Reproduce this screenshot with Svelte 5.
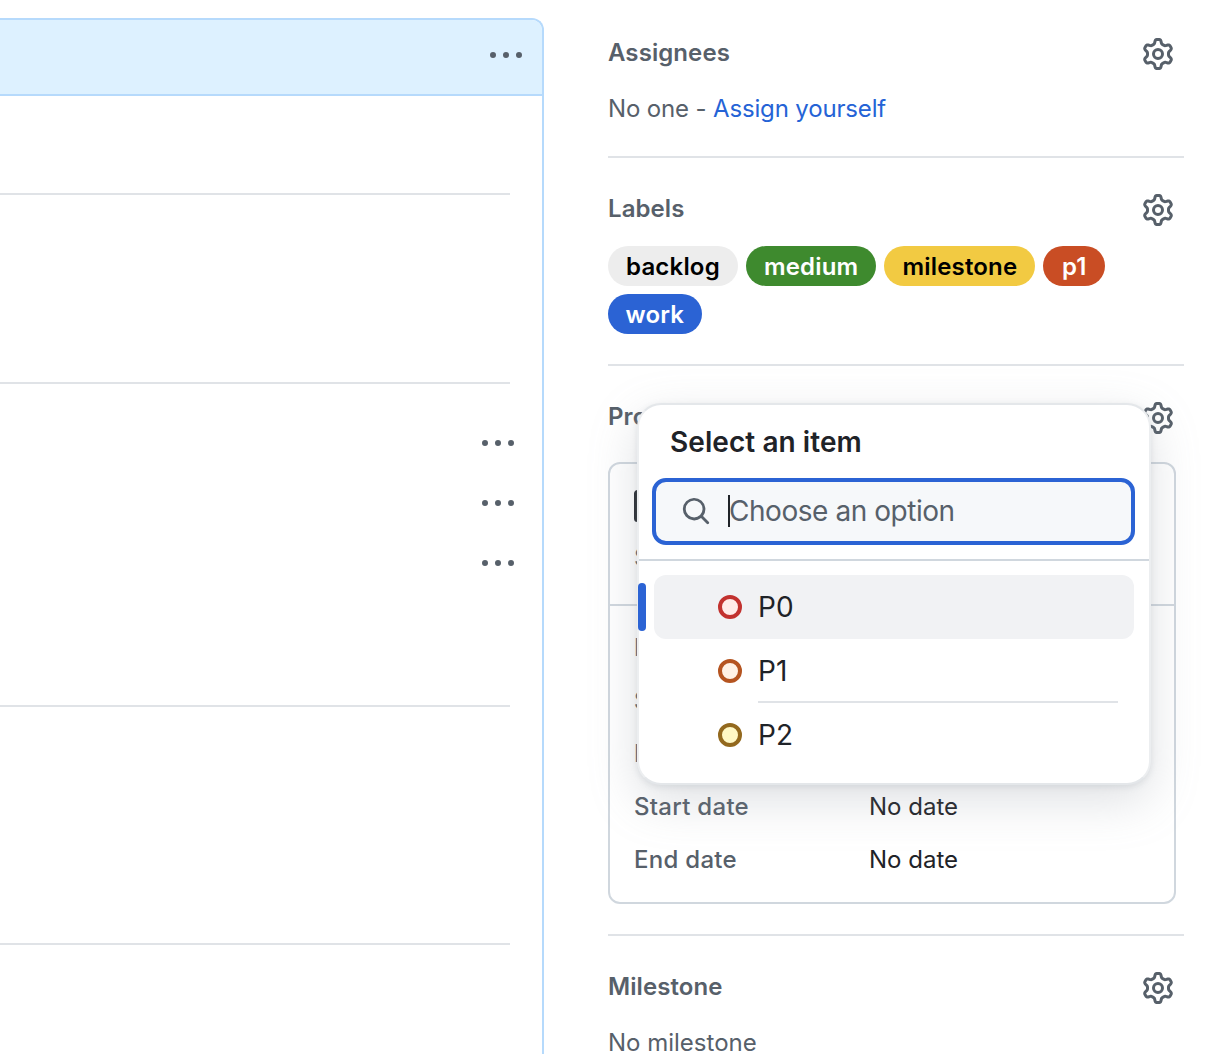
<script>
  const gear = "M8 0a8.2 8.2 0 0 1 .701.031C9.444.095 9.99.645 10.16 1.29l.288 1.107c.018.066.079.158.212.224.231.114.454.243.668.386.123.082.233.09.299.071l1.103-.303c.644-.176 1.392.021 1.82.63.27.385.506.792.704 1.218.315.675.111 1.422-.364 1.891l-.814.806c-.049.048-.098.147-.088.294.016.257.016.515 0 .772-.01.147.038.246.088.294l.814.806c.475.469.679 1.216.364 1.891a7.977 7.977 0 0 1-.704 1.217c-.428.61-1.176.807-1.82.63l-1.102-.302c-.067-.019-.177-.011-.3.071a5.909 5.909 0 0 1-.668.386c-.133.066-.194.158-.211.224l-.29 1.106c-.168.646-.715 1.196-1.458 1.26a8.006 8.006 0 0 1-1.402 0c-.743-.064-1.289-.614-1.458-1.26l-.289-1.106c-.018-.066-.079-.158-.212-.224a5.738 5.738 0 0 1-.668-.386c-.123-.082-.233-.09-.299-.071l-1.103.303c-.644.176-1.392-.021-1.82-.63a8.12 8.12 0 0 1-.704-1.218c-.315-.675-.111-1.422.363-1.891l.815-.806c.05-.048.098-.147.088-.294a6.214 6.214 0 0 1 0-.772c.01-.147-.038-.246-.088-.294l-.815-.806C.635 6.045.431 5.298.746 4.623a7.92 7.92 0 0 1 .704-1.217c.428-.61 1.176-.807 1.82-.63l1.102.302c.067.019.177.011.3-.071.214-.143.437-.272.668-.386.133-.066.194-.158.211-.224l.29-1.106C6.009.645 6.556.095 7.299.03 7.53.01 7.764 0 8 0Zm-.571 1.525c-.036.003-.108.036-.137.146l-.289 1.105c-.147.561-.549.967-.998 1.189-.173.086-.34.183-.5.29-.417.278-.97.423-1.529.27l-1.103-.303c-.109-.03-.175.016-.195.045-.22.312-.412.644-.573.99-.014.031-.021.11.059.19l.815.806c.411.406.562.957.53 1.456a4.709 4.709 0 0 0 0 .582c.032.499-.119 1.05-.53 1.456l-.815.806c-.081.08-.073.159-.059.19.162.346.353.677.573.989.02.03.085.076.195.046l1.102-.303c.56-.153 1.113-.008 1.53.27.161.107.328.204.501.29.447.222.85.629.997 1.189l.289 1.105c.029.109.101.143.137.146a6.6 6.6 0 0 0 1.142 0c.036-.003.108-.036.137-.146l.289-1.105c.147-.561.549-.967.998-1.189.173-.086.34-.183.5-.29.417-.278.97-.423 1.529-.27l1.103.303c.109.029.175-.016.195-.045.22-.313.411-.644.573-.99.014-.031.021-.11-.059-.19l-.815-.806c-.411-.406-.562-.957-.53-1.456a4.709 4.709 0 0 0 0-.582c-.032-.499.119-1.05.53-1.456l.815-.806c.081-.08.073-.159.059-.19a6.464 6.464 0 0 0-.573-.989c-.02-.03-.085-.076-.195-.046l-1.102.303c-.56.153-1.113.008-1.53-.27a4.44 4.44 0 0 0-.501-.29c-.447-.222-.85-.629-.997-1.189l-.289-1.105c-.029-.11-.101-.143-.137-.146a6.6 6.6 0 0 0-1.142 0ZM11 8a3 3 0 1 1-6 0 3 3 0 0 1 6 0ZM9.5 8a1.5 1.5 0 1 0-3.001.001A1.5 1.5 0 0 0 9.5 8Z";
  const kebab = "M8 9a1.5 1.5 0 1 0 0-3 1.5 1.5 0 0 0 0 3ZM1.5 9a1.5 1.5 0 1 0 0-3 1.5 1.5 0 0 0 0 3Zm13 0a1.5 1.5 0 1 0 0-3 1.5 1.5 0 0 0 0 3Z";
  const search = "M10.68 11.74a6 6 0 0 1-7.922-8.982 6 6 0 0 1 8.982 7.922l3.04 3.04a.749.749 0 0 1-.326 1.275.749.749 0 0 1-.734-.215ZM11.5 7a4.499 4.499 0 1 0-8.997 0A4.499 4.499 0 0 0 11.5 7Z";
  const table = "M0 1.75C0 .784.784 0 1.75 0h12.5C15.216 0 16 .784 16 1.75v12.5A1.75 1.75 0 0 1 14.25 16H1.75A1.75 1.75 0 0 1 0 14.25ZM6.5 6.5v8h7.75a.25.25 0 0 0 .25-.25V6.5Zm8-1.5V1.75a.25.25 0 0 0-.25-.25H6.5V5Zm-9.5 0V1.5H1.75a.25.25 0 0 0-.25.25V5Zm-3.5 1.5v7.75c0 .138.112.25.25.25H5v-8Z";
  const labels = [
    { name: "backlog", cls: "l-grey" },
    { name: "medium", cls: "l-green" },
    { name: "milestone", cls: "l-yellow" },
    { name: "p1", cls: "l-red" },
    { name: "work", cls: "l-blue" }
  ];
  const fields = [
    ["Priority", "P1"],
    ["Size", "M"],
    ["Iteration", "None"],
    ["Start date", "No date"],
    ["End date", "No date"]
  ];
  const options = [
    { name: "P0", cls: "c-red", active: true },
    { name: "P1", cls: "c-orange", active: false },
    { name: "P2", cls: "c-yellow", active: false }
  ];
</script>

<div class="page">
  <main class="main">
    <header class="timeline-head">
      <svg class="icon" viewBox="0 0 16 16" aria-hidden="true"><path d={kebab} /></svg>
    </header>
    <div class="block b1"></div>
    <div class="block b2"></div>
    <div class="block b3">
      {#each [0, 1, 2] as i (i)}
        <div class="task">
          <svg class="icon" viewBox="0 0 16 16" aria-hidden="true"><path d={kebab} /></svg>
        </div>
      {/each}
    </div>
    <div class="block b4"></div>
  </main>

  <aside class="side">
    <section class="sec s-assign">
      <div class="sec-head">
        <h3>Assignees</h3>
        <svg class="icon" viewBox="0 0 16 16" aria-hidden="true"><path d={gear} /></svg>
      </div>
      <p class="muted assign">No one - <a href="#top">Assign yourself</a></p>
    </section>

    <section class="sec s-labels">
      <div class="sec-head">
        <h3>Labels</h3>
        <svg class="icon" viewBox="0 0 16 16" aria-hidden="true"><path d={gear} /></svg>
      </div>
      <div class="labels">
        {#each labels as l (l.name)}
          <span class="label {l.cls}">{l.name}</span>
        {/each}
      </div>
    </section>

    <section class="sec s-projects">
      <div class="sec-head">
        <h3>Projects</h3>
        <svg class="icon" viewBox="0 0 16 16" aria-hidden="true"><path d={gear} /></svg>
      </div>
      <div class="project">
        <div class="project-top">
          <div class="project-title">
            <svg class="icon table-icon" viewBox="0 0 16 16" aria-hidden="true"><path d={table} /></svg>
            <span class="project-name">Backlog</span>
          </div>
          <div class="project-status">Status</div>
        </div>
        <dl class="fields">
          {#each fields as f (f[0])}
            <dt>{f[0]}</dt>
            <dd>{f[1]}</dd>
          {/each}
        </dl>
      </div>

      <div class="popup">
        <div class="popup-title">Select an item</div>
        <div class="search">
          <svg class="icon" viewBox="0 0 16 16" aria-hidden="true"><path d={search} /></svg>
          <span class="caret"></span>
          <span class="placeholder">Choose an option</span>
        </div>
        <div class="popup-rule"></div>
        <ul class="options">
          {#each options as o (o.name)}
            <li class="option" class:active={o.active}>
              <span class="dot {o.cls}"></span>
              <span class="opt-name">{o.name}</span>
            </li>
          {/each}
        </ul>
      </div>
    </section>

    <section class="sec s-milestone">
      <div class="sec-head">
        <h3>Milestone</h3>
        <svg class="icon" viewBox="0 0 16 16" aria-hidden="true"><path d={gear} /></svg>
      </div>
      <p class="muted milestone">No milestone</p>
    </section>
  </aside>
</div>

<style>
  :global(html), :global(body) {
    margin: 0;
    height: 1054px;
    overflow: hidden;
    background: #fff;
  }
  .page {
    display: flex;
    height: 1054px;
    overflow: hidden;
    font-family: Inter, "Liberation Sans", sans-serif;
    font-size: 24px;
    color: #1f2328;
  }
  .main {
    box-sizing: border-box;
    flex: 0 0 544px;
    margin: 18px 64px 0 0;
    border-top: 2px solid #b6dafc;
    border-right: 2px solid #b6dafc;
    border-top-right-radius: 12px;
  }
  .timeline-head {
    box-sizing: border-box;
    height: 76px;
    background: #ddf1ff;
    border-bottom: 2px solid #b6dafc;
    border-top-right-radius: 10px;
    display: flex;
    align-items: center;
    justify-content: flex-end;
    padding: 0 20px 2px 0;
  }
  .icon {
    display: block;
    width: 32px;
    height: 32px;
    flex: none;
    fill: #57606a;
  }
  .block {
    box-sizing: border-box;
    width: 510px;
    border-bottom: 2px solid #e0e3e7;
  }
  .b1 { height: 99px; }
  .b2 { height: 189px; }
  .b3 {
    height: 323px;
    padding-top: 44px;
    display: flex;
    flex-direction: column;
    gap: 28px;
  }
  .b4 { height: 238px; }
  .task {
    display: flex;
    justify-content: flex-end;
    margin-right: -4px;
  }

  .side {
    flex: 0 0 576px;
  }
  .sec {
    box-sizing: border-box;
    position: relative;
    border-bottom: 2px solid #e0e3e7;
    padding-top: 36px;
  }
  .sec:last-child { border-bottom: 0; }
  .s-assign { padding-top: 38px; padding-bottom: 34px; height: 158px; }
  .s-labels { height: 208px; }
  .s-projects { height: 570px; }
  .sec-head {
    height: 32px;
    display: flex;
    align-items: center;
    justify-content: space-between;
    padding-right: 10px;
  }
  h3 {
    margin: 0 0 2px;
    font-size: 24px;
    font-weight: 600;
    line-height: 30px;
    letter-spacing: 0.08px;
    color: #57606a;
  }
  .muted {
    margin: 0;
    line-height: 32px;
    color: #57606a;
  }
  .assign { margin-top: 23px; letter-spacing: -0.15px; }
  .milestone { margin-top: 23px; }
  a {
    color: #2563d6;
    text-decoration: none;
  }
  .labels {
    display: flex;
    flex-wrap: wrap;
    gap: 8px;
    margin-top: 20px;
    width: 540px;
  }
  .label {
    height: 40px;
    line-height: 42px;
    padding: 0 18px;
    border-radius: 20px;
    font-weight: 600;
    letter-spacing: 0.19px;
  }
  .l-grey { background: #ededed; color: #000; }
  .l-green { background: #3e8a2e; color: #fff; }
  .l-yellow { background: #f2ca42; color: #000; }
  .l-red { background: #c94d24; color: #fff; padding: 0 18.5px; }
  .l-blue { background: #2b63d4; color: #fff; padding: 0 17.5px; }

  .project {
    box-sizing: border-box;
    width: 568px;
    height: 442px;
    margin-top: 28px;
    border: 2px solid #d0d7de;
    border-radius: 12px;
  }
  .project-top {
    box-sizing: border-box;
    height: 142px;
    padding: 26px 24px 0;
    border-bottom: 2px solid #d0d7de;
  }
  .project-title {
    display: flex;
    align-items: center;
    gap: 8px;
    font-weight: 600;
    line-height: 32px;
  }
  .project-name { visibility: hidden; }
  .table-icon { fill: #1f2328; }
  .project-status { margin-top: 20px; color: #57606a; line-height: 32px; }
  .fields {
    display: grid;
    grid-template-columns: 235px 1fr;
    grid-auto-rows: 53px;
    margin: 15px 0 0;
    padding-left: 24px;
    align-items: center;
  }
  dt {
    color: #57606a;
    font-weight: 500;
    letter-spacing: 0.28px;
  }
  dd {
    margin: 0;
    color: #1f2328;
  }

  .popup {
    box-sizing: border-box;
    position: absolute;
    left: 29px;
    top: 37px;
    width: 514px;
    height: 382px;
    background: #fff;
    border: 2px solid #e4e7ea;
    border-left-color: #eceef0;
    border-right-color: #eceef0;
    border-radius: 24px;
    box-shadow: 0 2px 6px rgba(140, 149, 159, 0.22), 0 16px 48px rgba(140, 149, 159, 0.28);
  }
  .popup-title {
    padding-left: 31px;
    margin-top: 19px;
    font-size: 28px;
    font-weight: 600;
    line-height: 36px;
    letter-spacing: 0.07px;
    color: #1f2328;
  }
  .search {
    box-sizing: border-box;
    display: flex;
    align-items: center;
    height: 67px;
    margin: 18px 14px 0 13px;
    padding: 0 0 1px 25px;
    background: #f6f8fa;
    border: 4px solid #2b63d4;
    border-radius: 14px;
  }
  .search .icon { width: 30px; height: 30px; }
  .caret {
    width: 2px;
    height: 32px;
    margin-left: 17px;
    background: #1f2328;
    flex: none;
  }
  .placeholder {
    font-size: 28px;
    color: #57606a;
    margin-left: -1px;
    letter-spacing: -0.45px;
  }
  .popup-rule {
    height: 2px;
    margin-top: 14px;
    background: #d0d7de;
  }
  .options {
    list-style: none;
    margin: 14px 15px 0;
    padding: 0;
  }
  .option {
    position: relative;
    display: flex;
    align-items: center;
    height: 64px;
    padding-left: 64px;
    border-radius: 12px;
  }
  .option.active { background: #f1f2f4; }
  .option.active::before {
    content: "";
    position: absolute;
    left: -16px;
    top: 8px;
    width: 8px;
    height: 48px;
    border-radius: 4px;
    background: #2b63d4;
  }
  .option:nth-child(2)::after {
    content: "";
    position: absolute;
    left: 104px;
    right: 16px;
    bottom: 0;
    height: 2px;
    background: #e0e3e7;
  }
  .dot {
    box-sizing: border-box;
    width: 24px;
    height: 24px;
    border-radius: 50%;
    border: 4px solid;
    flex: none;
  }
  .c-red { border-color: #c2322f; background: #ffebe9; }
  .c-orange { border-color: #b55420; background: #fff1e5; }
  .c-yellow { border-color: #93691e; background: #fff8c5; }
  .opt-name {
    margin-left: 16px;
    font-size: 28px;
    color: #1f2328;
  }
</style>
